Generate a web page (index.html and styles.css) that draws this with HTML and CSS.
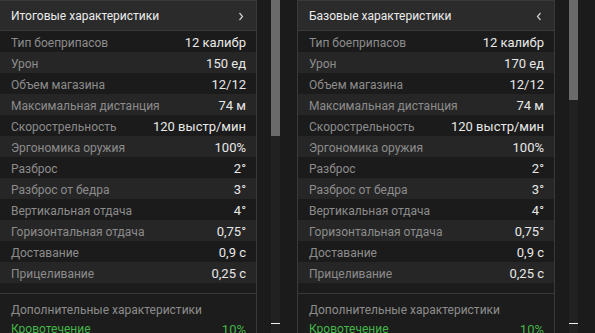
FILE: index.html
```html
<!DOCTYPE html>
<html lang="ru">
<head>
<meta charset="utf-8">
<link rel="stylesheet" href="styles.css">
</head>
<body>
<div class="app">
  <section class="column first">
    <div class="panel">
      <div class="panel-head">
        <span class="title">Итоговые характеристики</span>
        <svg class="chev" width="6" height="9" viewBox="0 0 6 9"><path d="M1.5 1 L4.5 4.5 L1.5 8" fill="none" stroke="#d0d0d0" stroke-width="1.2"/></svg>
      </div>
      <div class="rows">
        <div class="row"><span class="label">Тип боеприпасов</span><span class="value">12 калибр</span></div>
        <div class="row"><span class="label">Урон</span><span class="value">150 ед</span></div>
        <div class="row"><span class="label">Объем магазина</span><span class="value">12/12</span></div>
        <div class="row"><span class="label">Максимальная дистанция</span><span class="value">74 м</span></div>
        <div class="row"><span class="label">Скорострельность</span><span class="value">120 выстр/мин</span></div>
        <div class="row"><span class="label">Эргономика оружия</span><span class="value">100%</span></div>
        <div class="row"><span class="label">Разброс</span><span class="value">2°</span></div>
        <div class="row"><span class="label">Разброс от бедра</span><span class="value">3°</span></div>
        <div class="row"><span class="label">Вертикальная отдача</span><span class="value">4°</span></div>
        <div class="row"><span class="label">Горизонтальная отдача</span><span class="value">0,75°</span></div>
        <div class="row"><span class="label">Доставание</span><span class="value">0,9 с</span></div>
        <div class="row"><span class="label">Прицеливание</span><span class="value">0,25 с</span></div>
      </div>
      <div class="extra">
        <div class="extra-title">Дополнительные характеристики</div>
        <div class="extra-row"><span>Кровотечение</span><span class="extra-value">10%</span></div>
      </div>
    </div>
    <div class="scrollbar"><div class="thumb" style="height:136px"></div><div class="spacer"></div><div class="dash"></div></div>
  </section>
  <section class="column">
    <div class="panel">
      <div class="panel-head">
        <span class="title">Базовые характеристики</span>
        <svg class="chev" width="6" height="9" viewBox="0 0 6 9"><path d="M4.5 1 L1.5 4.5 L4.5 8" fill="none" stroke="#d0d0d0" stroke-width="1.2"/></svg>
      </div>
      <div class="rows">
        <div class="row"><span class="label">Тип боеприпасов</span><span class="value">12 калибр</span></div>
        <div class="row"><span class="label">Урон</span><span class="value">170 ед</span></div>
        <div class="row"><span class="label">Объем магазина</span><span class="value">12/12</span></div>
        <div class="row"><span class="label">Максимальная дистанция</span><span class="value">74 м</span></div>
        <div class="row"><span class="label">Скорострельность</span><span class="value">120 выстр/мин</span></div>
        <div class="row"><span class="label">Эргономика оружия</span><span class="value">100%</span></div>
        <div class="row"><span class="label">Разброс</span><span class="value">2°</span></div>
        <div class="row"><span class="label">Разброс от бедра</span><span class="value">3°</span></div>
        <div class="row"><span class="label">Вертикальная отдача</span><span class="value">4°</span></div>
        <div class="row"><span class="label">Горизонтальная отдача</span><span class="value">0,75°</span></div>
        <div class="row"><span class="label">Доставание</span><span class="value">0,9 с</span></div>
        <div class="row"><span class="label">Прицеливание</span><span class="value">0,25 с</span></div>
      </div>
      <div class="extra">
        <div class="extra-title">Дополнительные характеристики</div>
        <div class="extra-row"><span>Кровотечение</span><span class="extra-value">10%</span></div>
      </div>
    </div>
    <div class="scrollbar"><div class="thumb" style="height:100px"></div><div class="spacer"></div><div class="dash"></div></div>
  </section>
</div>
</body>
</html>
```
FILE: styles.css
```css
* { box-sizing: border-box; }
html, body {
  margin: 0;
  padding: 0;
  background: #1b1b1b;
  height: 333px;
  overflow: hidden;
}
body {
  font-family: Roboto, "Liberation Sans", sans-serif;
  font-size: 12px;
  color: #e6e6e6;
}
.app {
  display: flex;
  height: 333px;
}
.column {
  display: flex;
  height: 333px;
  padding-right: 17px;
}
.column.first {
  margin-left: -1px;
}
.panel {
  width: 258px;
  height: 345px;
  border: 1px solid #393939;
  border-bottom: none;
  background: #1c1c1c;
}
.panel-head {
  height: 30px;
  background: #2b2b2b;
  border-bottom: 1px solid #3a3a3a;
  display: flex;
  align-items: center;
  justify-content: space-between;
  padding: 1px 12px 0 11px;
}
.title {
  color: #ececec;
  font-size: 12px;
}
.chev { display: block; }
.rows { display: flex; flex-direction: column; }
.row {
  height: 21px;
  display: flex;
  align-items: center;
  justify-content: space-between;
  padding: 2px 10px 0 11px;
}
.row:nth-child(odd) { background: #1b1b1b; }
.row:nth-child(even) { background: #262626; }
.label { color: #8c8c8c; font-size: 12px; }
.value { color: #e8e8e8; font-size: 13px; }
.extra {
  margin-top: 10px;
  border-top: 1px solid #383838;
  padding: 7px 10px 0 11px;
}
.extra-title {
  color: #8c8c8c;
  line-height: 19px;
}
.extra-row {
  display: flex;
  justify-content: space-between;
  line-height: 19px;
  color: #44b548;
}
.extra-value { font-size: 13px; }
.scrollbar {
  margin-left: 14px;
  width: 9px;
  background: #212121;
  display: flex;
  flex-direction: column;
}
.thumb { background: #6a6a6a; }
.spacer { flex: 1; }
.dash {
  height: 1px;
  background: #f0f0f0;
  margin-bottom: 9px;
}
```
